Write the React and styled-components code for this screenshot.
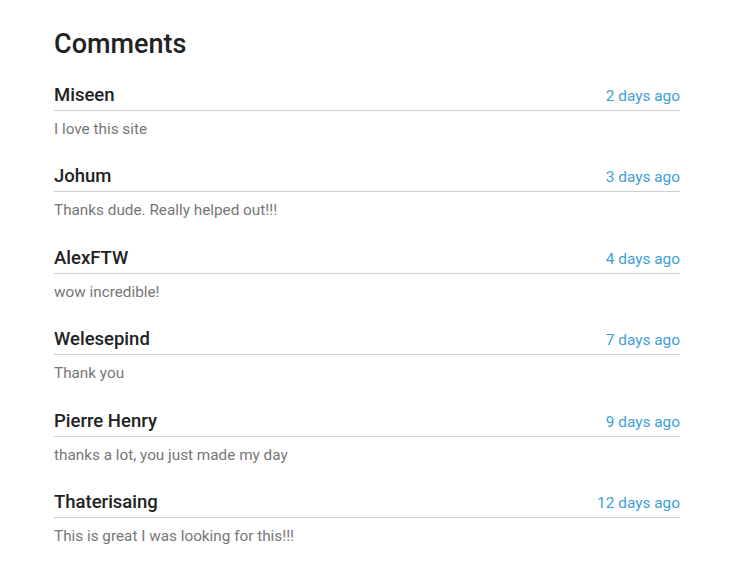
import React from 'react';
import styled, { createGlobalStyle } from 'styled-components';

const comments = [
  { name: 'Miseen', when: '2 days ago', text: 'I love this site' },
  { name: 'Johum', when: '3 days ago', text: 'Thanks dude. Really helped out!!!' },
  { name: 'AlexFTW', when: '4 days ago', text: 'wow incredible!' },
  { name: 'Welesepind', when: '7 days ago', text: 'Thank you' },
  { name: 'Pierre Henry', when: '9 days ago', text: 'thanks a lot, you just made my day' },
  { name: 'Thaterisaing', when: '12 days ago', text: 'This is great I was looking for this!!!' },
];

const Global = createGlobalStyle`
  body {
    margin: 0;
    background: #fff;
    font-family: Roboto, 'Liberation Sans', sans-serif;
  }
`;

const Wrap = styled.div`
  width: 626px;
  padding: 28px 0 0 54px;
`;

const Title = styled.h2`
  margin: 0 0 23px;
  font-size: 27px;
  line-height: 32px;
  font-weight: 500;
  color: #222;
`;

const List = styled.div`
  display: flex;
  flex-direction: column;
  gap: 25.4px;
`;

const Head = styled.div`
  display: flex;
  justify-content: space-between;
  align-items: baseline;
  padding-bottom: 3px;
  border-bottom: 1px solid #cfcfcf;
`;

const Name = styled.span`
  font-size: 18.5px;
  line-height: 24px;
  font-weight: 500;
  color: #222;
`;

const When = styled.span`
  font-size: 15.4px;
  color: #3d9fd8;
`;

const Text = styled.p`
  margin: 8px 0 0;
  font-size: 15.3px;
  line-height: 20px;
  color: #777;
`;

export default function App() {
  return (
    <Wrap>
      <Global />
      <Title>Comments</Title>
      <List>
        {comments.map((c) => (
          <div key={c.name}>
            <Head>
              <Name>{c.name}</Name>
              <When>{c.when}</When>
            </Head>
            <Text>{c.text}</Text>
          </div>
        ))}
      </List>
    </Wrap>
  );
}
